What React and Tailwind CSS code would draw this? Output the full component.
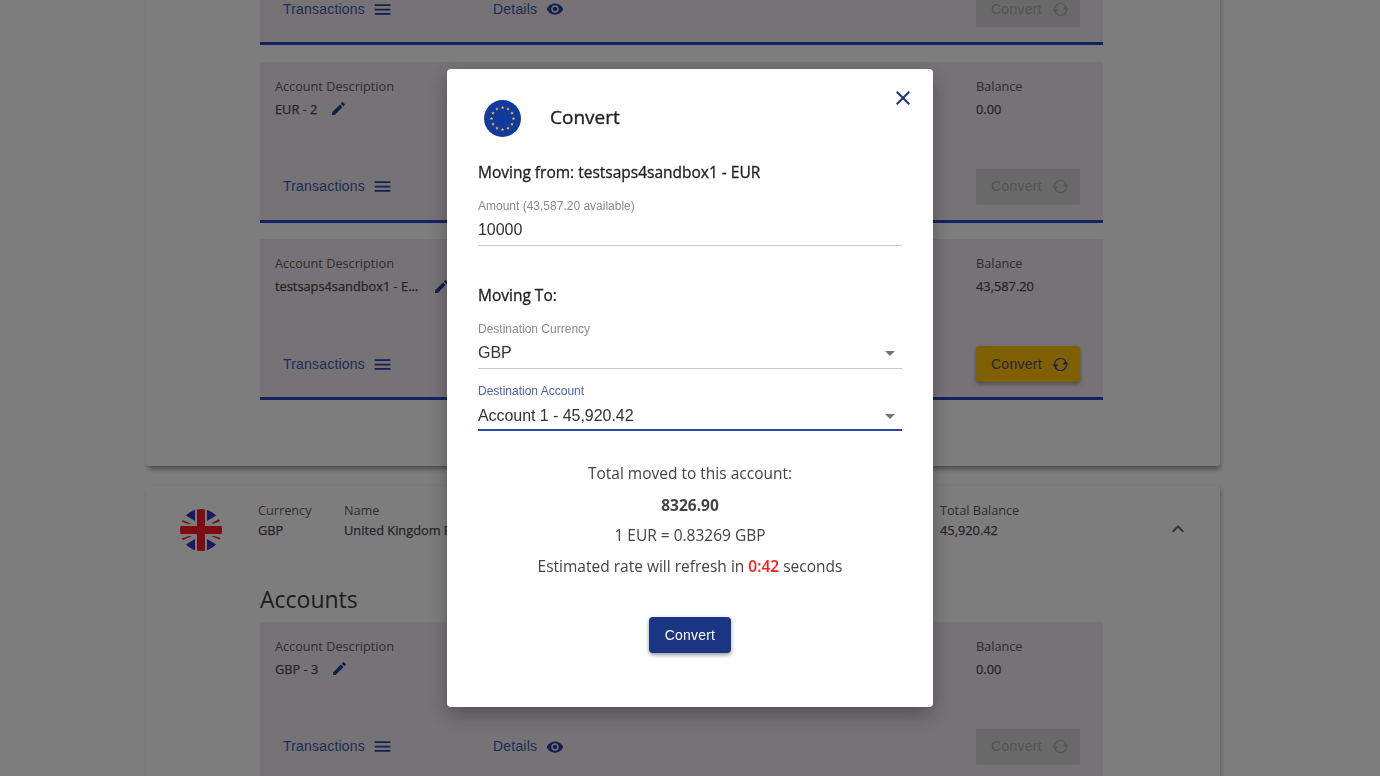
import React from "react";
import { MdClose, MdEdit, MdMenu, MdVisibility, MdArrowDropDown, MdExpandLess } from "react-icons/md";

const OPEN = "font-['Open_Sans','Noto_Sans',sans-serif]";
const ARIAL = "font-['Liberation_Sans',Arial,sans-serif]";
const LABEL = `${OPEN} text-[12.7px] leading-[18px] text-[#5c5c5c]`;
const VALUE = `${OPEN} text-[12.8px] leading-[18px] text-[#4a4a4a] [-webkit-text-stroke:0.25px_#4a4a4a]`;
const HEAD = `${OPEN} text-[15.5px] leading-[22px] text-[#222] [-webkit-text-stroke:0.3px_#222]`;
const BODY = `${OPEN} text-center text-[15.5px] leading-[24px] text-[#444]`;

function SyncIcon({ className }) {
  return (
    <svg viewBox="0 0 24 24" className={className} fill="none" stroke="currentColor" strokeWidth="1.7" strokeLinecap="round">
      <path d="M3.500 11C4.300 6.500 8 3.500 12.300 3.500c2.700 0 5 1.200 6.600 3.400V9" />
      <path d="M20.500 13C19.700 17.500 16 20.500 11.700 20.500c-2.700 0-5-1.200-6.600-3.400V15" />
      <path d="M0.500 12h8.500l-4.200 4.500z" fill="currentColor" stroke="none" />
      <path d="M23.500 12H15l4.200-4.500z" fill="currentColor" stroke="none" />
    </svg>
  );
}

function EuFlag() {
  const stars = Array.from({ length: 12 }, (_, i) => {
    const a = (i * Math.PI) / 6;
    return [18.5 + 11 * Math.sin(a), 18.5 - 11 * Math.cos(a)];
  });
  return (
    <svg viewBox="0 0 37 37" className="h-[37px] w-[37px] shrink-0">
      <circle cx="18.5" cy="18.5" r="18.5" fill="#123a9c" />
      {stars.map(([x, y], i) => (
        <polygon
          key={i}
          fill="#e8b630"
          points={`${x},${y - 1.7} ${x + 0.5},${y - 0.5} ${x + 1.7},${y - 0.4} ${x + 0.8},${y + 0.4} ${x + 1.1},${y + 1.6} ${x},${y + 0.9} ${x - 1.1},${y + 1.6} ${x - 0.8},${y + 0.4} ${x - 1.7},${y - 0.4} ${x - 0.5},${y - 0.5}`}
        />
      ))}
    </svg>
  );
}

function UkFlag() {
  return (
    <svg viewBox="0 0 42 42" className="h-[42px] w-[42px] shrink-0">
      <defs>
        <clipPath id="ukc">
          <circle cx="21" cy="21" r="21" />
        </clipPath>
      </defs>
      <g clipPath="url(#ukc)">
        <rect width="42" height="42" fill="#f8f8f8" />
        <path d="M5 6L15 12V0zM27 0v12l10-6zM5 36l10-6v12zM27 42V30l10 6z" fill="#3232c8" />
        <path d="M0 12l8 3 3-.5-10-4zM41 9l-10 5.500h3l8-3zM1 32l11-5h-3l-9 3zM31 27l10 4v-2l-7-2z" fill="#e8202c" />
        <rect x="17" width="8" height="42" fill="#f41824" />
        <rect y="17" width="42" height="8" fill="#f41824" />
      </g>
    </svg>
  );
}

function AccountCard({ desc, balance, active, truncate }) {
  return (
    <div className="h-[161px] border-b-[3px] border-[#2b45c4] bg-[#ebe7eb]">
      <div className="flex h-[107px] justify-between pl-[15px] pr-[23px] pt-[15px]">
        <div>
          <div className={LABEL}>Account Description</div>
          <div className={`mt-[5px] flex h-[18px] items-center ${truncate ? "gap-[12px]" : "gap-[13px]"}`}>
            <span className={`${VALUE} max-w-[146px] truncate`}>{desc}</span>
            <MdEdit className="text-[17px] text-[#27419f]" />
          </div>
        </div>
        <div className="w-[104px]">
          <div className={LABEL}>Balance</div>
          <div className={`${VALUE} mt-[5px]`}>{balance}</div>
        </div>
      </div>
      <div className="grid grid-cols-[210px_1fr_104px] items-center pl-[23px] pr-[23px]">
        <div className={`${ARIAL} flex items-center gap-[7px] text-[14px] tracking-[0.2px] text-[#3f5aa8]`}>
          Transactions
          <MdMenu className="text-[21px] text-[#27419f]" />
        </div>
        <div className={`${ARIAL} flex items-center gap-[9px] text-[14px] tracking-[0.2px] text-[#3f5aa8]`}>
          Details
          <MdVisibility className="text-[18px] text-[#27419f]" />
        </div>
        {active ? (
          <div className={`${ARIAL} flex h-[36px] items-center gap-[10px] rounded-[3px] bg-[#ffbe00] pl-[15px] text-[14px] tracking-[0.25px] text-[#4b4d6b] shadow-[0_2px_4px_rgba(0,0,0,0.35)]`}>
            Convert
            <SyncIcon className="h-[17px] w-[17px] text-[#27419f]" />
          </div>
        ) : (
          <div className={`${ARIAL} flex h-[36px] items-center gap-[10px] rounded-[2px] bg-[#d4d2d4] pl-[15px] text-[14px] tracking-[0.25px] text-[#a9a8aa]`}>
            Convert
            <SyncIcon className="h-[17px] w-[17px] text-[#a9a8aa]" />
          </div>
        )}
      </div>
    </div>
  );
}

function Field({ label, value, focused, select }) {
  return (
    <div className={focused ? "mt-[14px]" : "mt-[15px]"}>
      <div className={`${ARIAL} text-[12px] leading-[16px] ${focused ? "text-[#4a62ad]" : "text-[#8a8a8a]"}`}>{label}</div>
      <div className={`${ARIAL} flex h-[24px] items-center justify-between text-[16px] leading-[24px] text-[#333] ${focused ? "mt-[5px]" : "mt-[4px]"}`}>
        <span className="tracking-[-0.05px]">{value}</span>
        {select && <MdArrowDropDown className="text-[24px] text-[#757575]" />}
      </div>
      <div className={focused ? "mt-[1px] h-[2px] bg-[#2b4a9e]" : "mt-[3px] h-[1px] bg-[#c9c9c9]"} />
    </div>
  );
}

export default function App() {
  return (
    <div className="relative h-[776px] w-[1380px] overflow-hidden bg-[#fdfbfd]">
      <div className="ml-[146px] mt-[-310px] flex w-[1074px] flex-col gap-[20px]">
        <div className="rounded-[3px] bg-[#fdfbfd] pb-[66px] pl-[114px] pr-[117px] pt-[194px] shadow-[1px_4px_5px_-1px_rgba(0,0,0,0.4)]">
          <div className="flex flex-col gap-[16.5px]">
            <AccountCard desc="EUR - 1" balance="0.00" />
            <AccountCard desc="EUR - 2" balance="0.00" />
            <AccountCard desc="testsaps4sandbox1 - EUR" balance="43,587.20" active truncate />
          </div>
        </div>
        <div className="rounded-[3px] bg-[#fdfbfd] pl-[114px] pr-[117px] shadow-[1px_2px_5px_-1px_rgba(0,0,0,0.4)]">
          <div className="-ml-[80px] flex h-[88px] items-start pt-[15px]">
            <div className="mt-[8px] w-[78px] shrink-0">
              <UkFlag />
            </div>
            <div className="w-[86px] shrink-0">
              <div className={LABEL}>Currency</div>
              <div className={`${VALUE} mt-[2px]`}>GBP</div>
            </div>
            <div className="w-[596px] shrink-0">
              <div className={LABEL}>Name</div>
              <div className={`${VALUE} mt-[2px]`}>United Kingdom Pound</div>
            </div>
            <div className="w-[226px] shrink-0">
              <div className={LABEL}>Total Balance</div>
              <div className={`${VALUE} mt-[2px]`}>45,920.42</div>
            </div>
            <MdExpandLess className="mt-[16px] shrink-0 text-[24px] text-[#666]" />
          </div>
          <div className={`${OPEN} mt-[8px] h-[39.5px] text-[23px] leading-[34px] text-[#3a3a3a]`}>Accounts</div>
          <AccountCard desc="GBP - 3" balance="0.00" />
        </div>
      </div>

      <div className="fixed inset-0 flex items-center justify-center bg-black/50">
        <div className="relative h-[638px] w-[486px] rounded-[4px] bg-white px-[31px] pt-[31px] shadow-[0_8px_20px_rgba(0,0,0,0.3)]">
          <MdClose className="absolute right-[18px] top-[17px] text-[24px] text-[#1a3583]" />
          <div className="flex h-[37px] items-center pl-[6px]">
            <EuFlag />
            <span className={`${OPEN} mb-[4px] ml-[29px] text-[19px] leading-[28px] text-[#222] [-webkit-text-stroke:0.35px_#222]`}>Convert</span>
          </div>
          <div className={`${HEAD} mt-[24px]`}>Moving from: testsaps4sandbox1 - EUR</div>
          <Field label="Amount (43,587.20 available)" value="10000" />
          <div className={`${HEAD} mt-[38px]`}>Moving To:</div>
          <Field label="Destination Currency" value="GBP" select />
          <Field label="Destination Account" value="Account 1 - 45,920.42" select focused />
          <div className={`${BODY} mt-[30px]`}>Total moved to this account:</div>
          <div className={`${BODY} mt-[8px] font-bold text-[#333]`}>8326.90</div>
          <div className={`${BODY} mt-[6px]`}>1 EUR = 0.83269 GBP</div>
          <div className={`${BODY} mt-[7px]`}>
            Estimated rate will refresh in <span className="font-semibold text-[#ff1a1a]">0:42</span> seconds
          </div>
          <div className="mt-[39px] flex justify-center">
            <button className={`${ARIAL} h-[36px] w-[82px] rounded-[4px] bg-[#1a3583] text-[14px] font-medium tracking-[0.2px] text-white shadow-[0_2px_4px_rgba(0,0,0,0.4)]`}>
              Convert
            </button>
          </div>
        </div>
      </div>
    </div>
  );
}
